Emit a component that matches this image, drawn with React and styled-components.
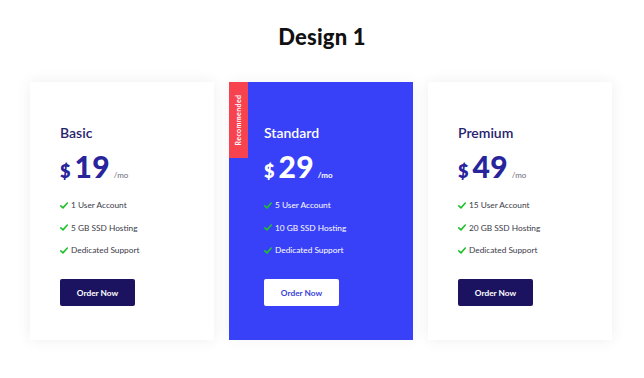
import React from "react";
import styled, { createGlobalStyle } from "styled-components";

const Global = createGlobalStyle`
  html, body { margin: 0; padding: 0; background: #ffffff; }
  body { font-family: "Lato", "Noto Sans", sans-serif; }
  * { box-sizing: border-box; }
`;

const Page = styled.div`
  width: 644px;
  min-height: 378px;
  padding-top: 24px;
  display: flex;
  flex-direction: column;
  align-items: center;
`;

const Heading = styled.h1`
  margin: 0 0 32px;
  font-size: 22px;
  line-height: 26px;
  font-weight: 900;
  color: #111111;
  letter-spacing: 0.2px;
`;

const Row = styled.div`
  display: flex;
  gap: 15px;
  margin-right: 2px;
`;

const Card = styled.div`
  position: relative;
  width: 184px;
  height: 258px;
  padding: 42px 0 0 ${(p) => (p.$featured ? "35px" : "30px")};
  background: ${(p) => (p.$featured ? "#3841f8" : "#ffffff")};
  box-shadow: ${(p) =>
    p.$featured ? "0 0 14px rgba(0,0,0,0.05)" : "0 0 14px rgba(0,0,0,0.07)"};
  display: flex;
  flex-direction: column;
  align-items: flex-start;
`;

const Badge = styled.div`
  position: absolute;
  left: 0;
  top: 0;
  width: 19px;
  height: 76px;
  background: #f7434f;
  display: flex;
  align-items: center;
  justify-content: center;
`;

const BadgeText = styled.span`
  transform: rotate(-90deg);
  white-space: nowrap;
  color: #ffffff;
  font-size: 7px;
  font-weight: 700;
  letter-spacing: 0.4px;
`;

const Title = styled.div`
  font-size: 14px;
  line-height: 17px;
  font-weight: 600;
  color: ${(p) => (p.$featured ? "#ffffff" : "#27236b")};
  margin-bottom: 11px;
`;

const Price = styled.div`
  display: flex;
  align-items: baseline;
  color: ${(p) => (p.$featured ? "#ffffff" : "#28249c")};
  height: 29px;
  line-height: 29px;
`;

const Currency = styled.span`
  font-size: 18px;
  font-weight: 800;
  margin-right: 4px;
`;

const Amount = styled.span`
  font-size: 30px;
  font-weight: 900;
  letter-spacing: 0.3px;
`;

const Per = styled.span`
  font-size: 8px;
  margin-left: 4px;
  font-weight: ${(p) => (p.$featured ? 700 : 400)};
  color: ${(p) => (p.$featured ? "#ffffff" : "#6b6b7a")};
`;

const Features = styled.ul`
  list-style: none;
  margin: 18px 0 0;
  padding: 0;
  display: flex;
  flex-direction: column;
  gap: 10.5px;
`;

const Feature = styled.li`
  display: flex;
  align-items: center;
  height: 12px;
  font-size: 8.3px;
  color: ${(p) => (p.$featured ? "#ffffff" : "#3b3b48")};
`;

const Check = styled.svg`
  width: 8px;
  height: 7px;
  margin-right: 3px;
  flex: none;
`;

const Button = styled.button`
  margin-top: 23px;
  width: 75px;
  height: 27px;
  border: none;
  border-radius: 2px;
  font-family: inherit;
  font-size: 8.3px;
  font-weight: 700;
  cursor: pointer;
  background: ${(p) => (p.$featured ? "#ffffff" : "#1c1360")};
  color: ${(p) => (p.$featured ? "#3a3fd8" : "#ffffff")};
`;

const CheckIcon = () => (
  <Check viewBox="0 0 8 7">
    <path
      d="M0.8 3.8 L3 5.9 L7.3 1"
      fill="none"
      stroke="#21c12e"
      strokeWidth="1.6"
      strokeLinecap="round"
      strokeLinejoin="round"
    />
  </Check>
);

const plans = [
  {
    name: "Basic",
    price: "19",
    features: ["1 User Account", "5 GB SSD Hosting", "Dedicated Support"],
  },
  {
    name: "Standard",
    price: "29",
    featured: true,
    features: ["5 User Account", "10 GB SSD Hosting", "Dedicated Support"],
  },
  {
    name: "Premium",
    price: "49",
    features: ["15 User Account", "20 GB SSD Hosting", "Dedicated Support"],
  },
];

export default function App() {
  return (
    <>
      <Global />
      <Page>
        <Heading>Design 1</Heading>
        <Row>
          {plans.map((p) => (
            <Card key={p.name} $featured={p.featured}>
              {p.featured && (
                <Badge>
                  <BadgeText>Recommended</BadgeText>
                </Badge>
              )}
              <Title $featured={p.featured}>{p.name}</Title>
              <Price $featured={p.featured}>
                <Currency>$</Currency>
                <Amount>{p.price}</Amount>
                <Per $featured={p.featured}>/mo</Per>
              </Price>
              <Features>
                {p.features.map((f) => (
                  <Feature key={f} $featured={p.featured}>
                    <CheckIcon />
                    {f}
                  </Feature>
                ))}
              </Features>
              <Button $featured={p.featured}>Order Now</Button>
            </Card>
          ))}
        </Row>
      </Page>
    </>
  );
}
